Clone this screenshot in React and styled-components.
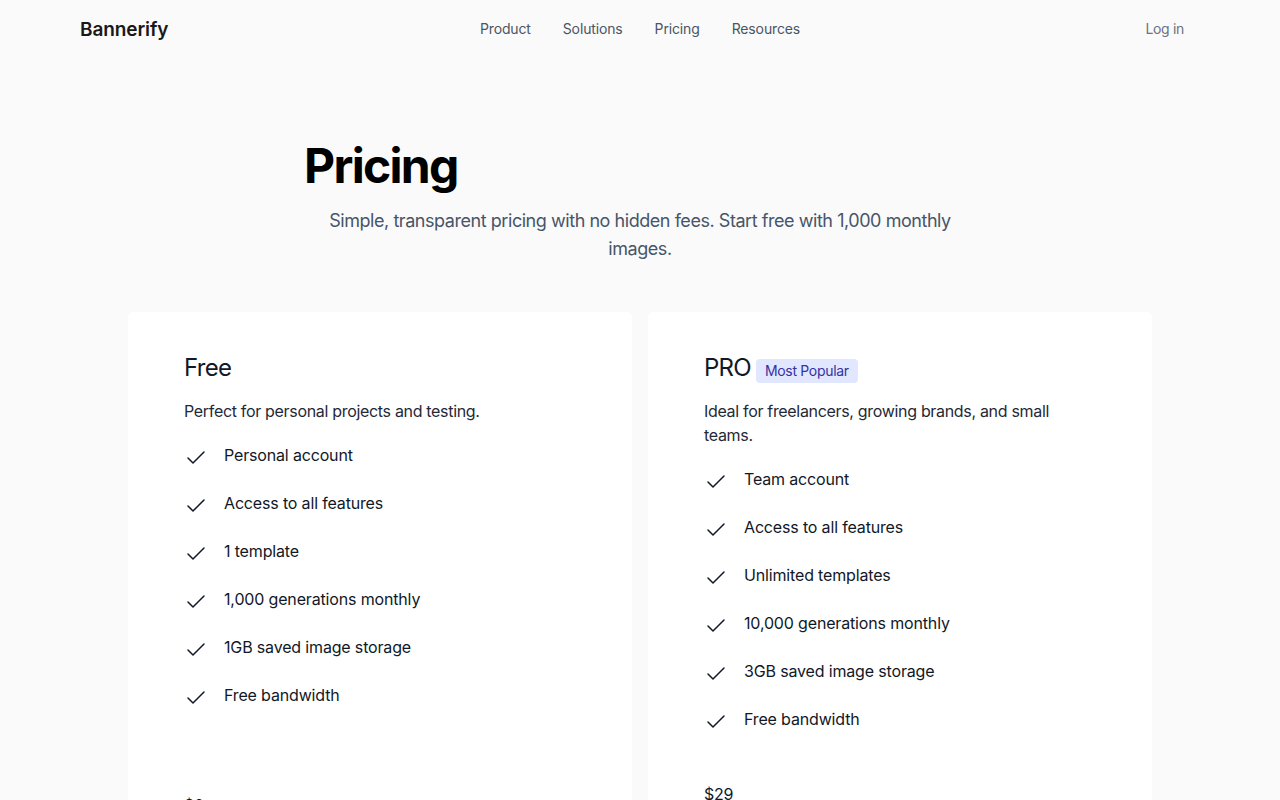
import React from "react"
import styled, { createGlobalStyle } from "styled-components"

const GlobalStyle = createGlobalStyle`
  * { box-sizing: border-box; }
  body {
    margin: 0;
    background: #fafafa;
    font-family: Inter, "Noto Sans", sans-serif;
    color: #111827;
    letter-spacing: -0.02em;
    -webkit-font-smoothing: antialiased;
  }
`

const plans = [
  {
    name: "Free",
    desc: "Perfect for personal projects and testing.",
    features: [
      "Personal account",
      "Access to all features",
      "1 template",
      "1,000 generations monthly",
      "1GB saved image storage",
      "Free bandwidth",
    ],
    price: "$0",
    priceGap: 86,
  },
  {
    name: "PRO",
    badge: "Most Popular",
    desc: "Ideal for freelancers, growing brands, and small teams.",
    features: [
      "Team account",
      "Access to all features",
      "Unlimited templates",
      "10,000 generations monthly",
      "3GB saved image storage",
      "Free bandwidth",
    ],
    price: "$29",
    priceGap: 51,
  },
]

function CheckIcon() {
  return (
    <svg width="24" height="24" viewBox="0 0 24 24" fill="none" stroke="#111827" strokeWidth="1.5" strokeLinecap="round" strokeLinejoin="round">
      <path d="M20 6 9 17l-5-5" />
    </svg>
  )
}

function App() {
  return (
    <>
      <GlobalStyle />
      <Header>
        <Logo>Bannerify</Logo>
        <Nav>
          <NavLink>Product</NavLink>
          <NavLink>Solutions</NavLink>
          <NavLink>Pricing</NavLink>
          <NavLink>Resources</NavLink>
        </Nav>
        <LogIn>Log in</LogIn>
      </Header>

      <Hero>
        <Title>Pricing</Title>
        <Subtitle>Simple, transparent pricing with no hidden fees. Start free with 1,000 monthly images.</Subtitle>
      </Hero>

      <Cards>
        {plans.map(plan => (
          <Card key={plan.name}>
            <PlanHead>
              <PlanName>{plan.name}</PlanName>
              {plan.badge && <Badge>{plan.badge}</Badge>}
            </PlanHead>
            <PlanDesc>{plan.desc}</PlanDesc>
            <Features>
              {plan.features.map(f => (
                <Feature key={f}>
                  <IconBox><CheckIcon /></IconBox>
                  <span>{f}</span>
                </Feature>
              ))}
            </Features>
            <Price $gap={plan.priceGap}>{plan.price}</Price>
          </Card>
        ))}
      </Cards>
    </>
  )
}

const Header = styled.header`
  max-width: 1120px;
  margin: 0 auto;
  height: 56px;
  display: grid;
  grid-template-columns: 1fr auto 1fr;
  align-items: center;
`

const Logo = styled.div`
  font-size: 19px;
  font-weight: 600;
  color: #18181b;
  letter-spacing: -0.1px;
  padding-top: 2px;
`

const Nav = styled.nav`
  display: flex;
  gap: 32px;
`

const NavLink = styled.a`
  font-size: 14px;
  color: #4b5563;
  letter-spacing: -0.01em;
  cursor: pointer;
`

const LogIn = styled.a`
  justify-self: end;
  font-size: 14px;
  color: #6b7280;
  padding: 0 16px;
`

const Hero = styled.section`
  max-width: 672px;
  margin: 86px auto 0;
`

const Title = styled.h1`
  margin: 0;
  font-size: 48px;
  line-height: 48px;
  font-weight: 700;
  color: #000;
  letter-spacing: -0.035em;
`

const Subtitle = styled.p`
  margin: 17px 0 0;
  font-size: 18px;
  line-height: 28px;
  color: #475569;
  text-align: center;
  letter-spacing: -0.025em;
`

const Cards = styled.div`
  max-width: 1024px;
  margin: 49px auto 0;
  display: grid;
  grid-template-columns: 1fr 1fr;
  gap: 16px;
`

const Card = styled.div`
  background: #fff;
  border-radius: 6px;
  padding: 40px 56px;
  display: flex;
  flex-direction: column;
`

const PlanHead = styled.div`
  display: flex;
  align-items: center;
  gap: 5px;
`

const PlanName = styled.h3`
  margin: 0;
  font-size: 24px;
  line-height: 32px;
  font-weight: 400;
  color: #111827;
  letter-spacing: -0.03em;
`

const Badge = styled.span`
  margin-top: 6px;
  background: #e0e7ff;
  color: #3730a3;
  font-size: 14px;
  line-height: 24px;
  padding: 0 9px;
  border-radius: 4px;
`

const PlanDesc = styled.p`
  margin: 15px 0 0;
  font-size: 16px;
  line-height: 24px;
  color: #1f2937;
  max-width: 360px;
`

const Features = styled.ul`
  list-style: none;
  margin: 20px 0 0;
  padding: 0;
  display: flex;
  flex-direction: column;
  gap: 24px;
`

const Feature = styled.li`
  display: flex;
  align-items: flex-start;
  gap: 16px;
  height: 24px;
  font-size: 16px;
  line-height: 24px;
  color: #111827;
  letter-spacing: -0.01em;
`

const IconBox = styled.span`
  display: flex;
  margin-top: 3px;
`

const Price = styled.div`
  margin-top: ${p => p.$gap}px;
  font-size: 16px;
  line-height: 24px;
  color: #111827;
`

export default App
